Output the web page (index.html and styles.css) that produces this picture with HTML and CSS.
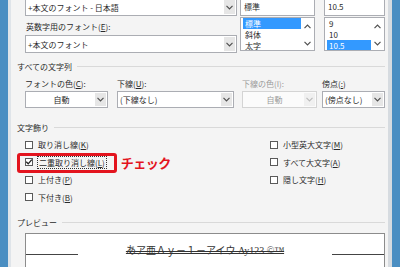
FILE: index.html
```html
<!DOCTYPE html>
<html lang="ja">
<head>
    <meta charset="UTF-8">
    <title>フォント</title>
    <link rel="stylesheet" href="styles.css">
</head>
<body>
    <div class="window">
        <div class="dialog">
            <!-- フォント名・スタイル・サイズ -->
            <div class="font-top">
                <div class="col-font">
                    <div class="combo">
                        <span class="combo-text">+本文のフォント - 日本語</span>
                        <span class="combo-btn"><svg class="chev" width="7" height="5" viewBox="0 0 7 5"><polyline points="0.5,0.8 3.5,3.8 6.5,0.8"/></svg></span>
                    </div>
                    <div class="label">英数字用のフォント(<u>E</u>):</div>
                    <div class="combo">
                        <span class="combo-text">+本文のフォント</span>
                        <span class="combo-btn"><svg class="chev" width="7" height="5" viewBox="0 0 7 5"><polyline points="0.5,0.8 3.5,3.8 6.5,0.8"/></svg></span>
                    </div>
                </div>
                <div class="col-style">
                    <div class="field">標準</div>
                    <div class="listbox">
                        <div class="list-items">
                            <div class="list-item sel">標準</div>
                            <div class="list-item">斜体</div>
                            <div class="list-item">太字</div>
                        </div>
                        <div class="list-scroll">
                            <svg class="chev" width="7" height="5" viewBox="0 0 7 5"><polyline points="0.5,4.2 3.5,1.2 6.5,4.2"/></svg>
                            <svg class="chev" width="7" height="5" viewBox="0 0 7 5"><polyline points="0.5,0.8 3.5,3.8 6.5,0.8"/></svg>
                        </div>
                    </div>
                </div>
                <div class="col-size">
                    <div class="field">10.5</div>
                    <div class="listbox">
                        <div class="list-items">
                            <div class="list-item">9</div>
                            <div class="list-item">10</div>
                            <div class="list-item sel">10.5</div>
                        </div>
                        <div class="list-scroll">
                            <svg class="chev" width="7" height="5" viewBox="0 0 7 5"><polyline points="0.5,4.2 3.5,1.2 6.5,4.2"/></svg>
                            <svg class="chev" width="7" height="5" viewBox="0 0 7 5"><polyline points="0.5,0.8 3.5,3.8 6.5,0.8"/></svg>
                        </div>
                    </div>
                </div>
            </div>

            <!-- すべての文字列 -->
            <div class="group-title first">すべての文字列</div>
            <div class="attr-row">
                <div class="attr attr-color">
                    <div class="attr-label">フォントの色(<u>C</u>):</div>
                    <div class="combo">
                        <span class="combo-text center">自動</span>
                        <span class="combo-btn"><svg class="chev" width="7" height="5" viewBox="0 0 7 5"><polyline points="0.5,0.8 3.5,3.8 6.5,0.8"/></svg></span>
                    </div>
                </div>
                <div class="attr attr-under">
                    <div class="attr-label">下線(<u>U</u>):</div>
                    <div class="combo">
                        <span class="combo-text">(下線なし)</span>
                        <span class="combo-btn"><svg class="chev" width="7" height="5" viewBox="0 0 7 5"><polyline points="0.5,0.8 3.5,3.8 6.5,0.8"/></svg></span>
                    </div>
                </div>
                <div class="attr attr-ucolor disabled">
                    <div class="attr-label">下線の色(I):</div>
                    <div class="combo">
                        <span class="combo-text center">自動</span>
                        <span class="combo-btn"><svg class="chev" width="7" height="5" viewBox="0 0 7 5"><polyline points="0.5,0.8 3.5,3.8 6.5,0.8"/></svg></span>
                    </div>
                </div>
                <div class="attr attr-emph">
                    <div class="attr-label">傍点(<u>:</u>)</div>
                    <div class="combo">
                        <span class="combo-text">(傍点なし)</span>
                        <span class="combo-btn"><svg class="chev" width="7" height="5" viewBox="0 0 7 5"><polyline points="0.5,0.8 3.5,3.8 6.5,0.8"/></svg></span>
                    </div>
                </div>
            </div>

            <!-- 文字飾り -->
            <div class="group-title deco">文字飾り</div>
            <div class="effects">
                <div class="effects-col">
                    <div class="check"><span class="box"></span>取り消し線(<u>K</u>)</div>
                    <div class="check marked">
                        <span class="box"><svg width="8" height="8" viewBox="0 0 8 8"><polyline points="1.2,3.8 3.2,5.8 6.8,1.6"/></svg></span>
                        <span class="focus">二重取り消し線(<u>L</u>)</span>
                        <span class="note">チェック</span>
                        <span class="note-frame"></span>
                    </div>
                    <div class="check"><span class="box"></span>上付き(<u>P</u>)</div>
                    <div class="check"><span class="box"></span>下付き(<u>B</u>)</div>
                </div>
                <div class="effects-col">
                    <div class="check"><span class="box"></span>小型英大文字(<u>M</u>)</div>
                    <div class="check"><span class="box"></span>すべて大文字(<u>A</u>)</div>
                    <div class="check"><span class="box"></span>隠し文字(<u>H</u>)</div>
                </div>
            </div>

            <!-- プレビュー -->
            <div class="group-title preview-title">プレビュー</div>
            <div class="preview">
                <span class="baseline"></span>
                <span class="sample">あア亜Ａｙ－１－アイウ Ay123 ©™</span>
                <span class="baseline"></span>
            </div>
        </div>
    </div>
</body>
</html>
```

FILE: styles.css
```css
* {
    margin: 0;
    padding: 0;
    box-sizing: border-box;
}

body {
    width: 400px;
    height: 267px;
    overflow: hidden;
    font-family: "Noto Sans CJK JP", "Noto Sans", sans-serif;
    font-size: 8px;
    color: #2a2a2a;
    background-color: #4a8ec2;
}

u {
    text-decoration: underline;
}

.window {
    display: flex;
    height: 267px;
    border-left: 8px solid #4a8ec2;
    border-right: 8px solid #4a8ec2;
}

.dialog {
    flex: 1;
    background-color: #f4f4f4;
    border-left: 3px solid #dfe4e9;
    border-right: 4px solid #d6dbe0;
    padding: 0 3px 0 6px;
    overflow: hidden;
}

/* 上段 */
.font-top {
    display: flex;
    margin-top: -2px;
    padding-left: 8px;
}

.col-font {
    width: 212px;
}

.col-style {
    width: 75px;
    margin-left: 3px;
}

.col-size {
    width: 61px;
    margin-left: 9px;
}

.combo {
    display: flex;
    align-items: center;
    height: 18px;
    background-color: #fff;
    border: 1px solid #abadb3;
}

.combo-text {
    flex: 1;
    padding-left: 2px;
    white-space: nowrap;
    overflow: hidden;
}

.combo-text.center {
    text-align: center;
}

.combo-btn {
    display: flex;
    align-items: center;
    justify-content: center;
    width: 11px;
    height: calc(100% - 2px);
    margin-right: 1px;
    background-color: #e6e6e6;
}

.chev {
    display: block;
    fill: none;
    stroke: #505050;
    stroke-width: 1.2;
}

.label {
    height: 13px;
    line-height: 13px;
    margin: 4px 0 2px 1px;
}

.field {
    height: 18px;
    line-height: 16px;
    padding-left: 3px;
    background-color: #fff;
    border: 1px solid #abadb3;
}

.listbox {
    display: flex;
    height: 34px;
    margin-top: 1px;
    background-color: #fff;
    border: 1px solid #abadb3;
}

.list-items {
    flex: 1;
    padding: 0 0 0 2px;
    overflow: hidden;
}

.list-item {
    height: 11px;
    line-height: 11px;
    padding-left: 2px;
}

.list-item.sel {
    background-color: #3399ff;
    color: #fff;
}

.list-scroll {
    display: flex;
    flex-direction: column;
    align-items: center;
    justify-content: space-between;
    width: 13px;
    padding: 6px 0 4px;
}

/* グループ見出し */
.group-title {
    display: flex;
    align-items: center;
    height: 14px;
    white-space: nowrap;
}

.group-title::after {
    content: "";
    flex: 1;
    height: 1px;
    margin-left: 5px;
    background-color: #d9d9d9;
}

.group-title.first {
    margin-top: 6px;
}

.group-title.deco {
    margin-top: 12px;
}

.group-title.preview-title {
    margin-top: 9.5px;
}

/* すべての文字列 */
.attr-row {
    display: flex;
    margin-top: 4px;
    padding-left: 8px;
}

.attr-label {
    height: 13px;
    line-height: 13px;
    margin-bottom: 1px;
}

.attr .combo {
    height: 17px;
}

.attr-color {
    width: 83px;
}

.attr-under {
    width: 117px;
    margin-left: 9px;
}

.attr-ucolor {
    width: 75px;
    margin-left: 8px;
}

.attr-emph {
    width: 63px;
    margin-left: 5px;
}

.disabled {
    color: #9a9a9a;
}

.disabled .combo {
    border-color: #d4d4d4;
    background-color: #fbfbfb;
}

.disabled .combo-btn {
    background-color: #f0f0f0;
}

.disabled .chev {
    stroke: #bcbcbc;
}

/* 文字飾り */
.effects {
    display: grid;
    grid-template-columns: 245px 1fr;
    margin-top: 2px;
    padding-left: 8px;
}

.check {
    display: flex;
    align-items: center;
    height: 17.5px;
    white-space: nowrap;
}

.box {
    width: 8px;
    height: 8px;
    margin-right: 5px;
    background-color: #fff;
    border: 1px solid #5a5a5a;
    flex-shrink: 0;
}

.box svg {
    display: block;
    margin: -1px 0 0 -1px;
    fill: none;
    stroke: #222;
    stroke-width: 1.3;
}

.check.marked {
    position: relative;
}

.focus {
    margin-left: -1px;
    padding: 0 1px;
    line-height: 11px;
    border: 1px dotted #333;
}

.note {
    margin-left: 14px;
    font-size: 13px;
    font-weight: bold;
    color: #e3141e;
    letter-spacing: -0.5px;
}

.note-frame {
    position: absolute;
    left: -8px;
    top: -0.5px;
    width: 100px;
    height: 20px;
    border: 3px solid #e3141e;
    border-radius: 3px;
}

/* プレビュー */
.preview {
    display: flex;
    justify-content: space-between;
    align-items: flex-start;
    height: 60px;
    margin: 3.5px 0 0 8px;
    background-color: #fff;
    border: 1px solid #8c8c8c;
}

.baseline {
    width: 52px;
    height: 1px;
    margin-top: 20px;
    background-color: #444;
}

.sample {
    margin-top: 10px;
    font-family: "Liberation Serif", "Noto Sans CJK JP", serif;
    font-size: 10px;
    line-height: 13px;
    color: #333;
    text-decoration: line-through double;
}
```
